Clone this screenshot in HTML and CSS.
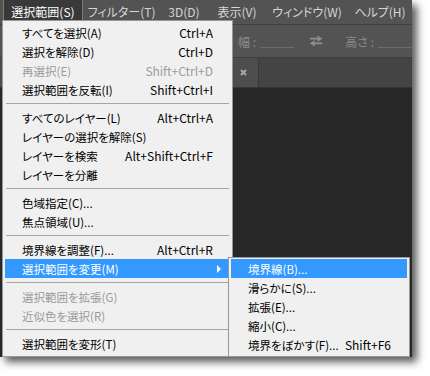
FILE: index.html
```html
<!DOCTYPE html>
<html lang="ja">
<head>
<meta charset="utf-8">
<link rel="stylesheet" href="styles.css">
</head>
<body>
<div class="window">
  <div class="menubar">
    <span class="mb-item active">選択範囲(S)</span>
    <span class="mb-item w-filter">フィルター(T)</span>
    <span class="mb-item w-3d">3D(D)</span>
    <span class="mb-item w-view">表示(V)</span>
    <span class="mb-item w-window">ウィンドウ(W)</span>
    <span class="mb-item w-help">ヘルプ(H)</span>
  </div>
  <div class="options">
    <span class="opt-label">幅 :</span>
    <span class="opt-field"></span>
    <svg class="swap" width="15" height="12" viewBox="0 0 15 12">
      <path d="M1 3.5H11" stroke="#8c8c8c" stroke-width="2" fill="none"/>
      <path d="M9 0L14 3.5L9 7Z" fill="#8c8c8c"/>
      <path d="M4 8.5H14" stroke="#8c8c8c" stroke-width="2" fill="none"/>
      <path d="M6 5L1 8.5L6 12Z" fill="#8c8c8c"/>
    </svg>
    <span class="opt-label">高さ :</span>
    <span class="opt-field"></span>
  </div>
  <div class="tabbar">
    <div class="tab">
      <svg width="7" height="7" viewBox="0 0 7 7"><path d="M1 1L6 6M6 1L1 6" stroke="#a9a9a9" stroke-width="2"/></svg>
    </div>
  </div>
  <div class="canvas"></div>

  <div class="dropdown">
    <div class="item"><span class="lbl">すべてを選択(A)</span><span>Ctrl+A</span></div>
    <div class="item"><span class="lbl">選択を解除(D)</span><span>Ctrl+D</span></div>
    <div class="item disabled"><span class="lbl">再選択(E)</span><span>Shift+Ctrl+D</span></div>
    <div class="item"><span class="lbl">選択範囲を反転(I)</span><span>Shift+Ctrl+I</span></div>
    <div class="sep"></div>
    <div class="item"><span class="lbl">すべてのレイヤー(L)</span><span>Alt+Ctrl+A</span></div>
    <div class="item"><span class="lbl">レイヤーの選択を解除(S)</span><span></span></div>
    <div class="item"><span class="lbl">レイヤーを検索</span><span>Alt+Shift+Ctrl+F</span></div>
    <div class="item"><span class="lbl">レイヤーを分離</span><span></span></div>
    <div class="sep"></div>
    <div class="item"><span class="lbl">色域指定(C)...</span><span></span></div>
    <div class="item"><span class="lbl">焦点領域(U)...</span><span></span></div>
    <div class="sep"></div>
    <div class="item"><span class="lbl">境界線を調整(F)...</span><span>Alt+Ctrl+R</span></div>
    <div class="item hl"><span class="lbl">選択範囲を変更(M)</span><span class="arrow"></span></div>
    <div class="sep"></div>
    <div class="item disabled"><span class="lbl">選択範囲を拡張(G)</span><span></span></div>
    <div class="item disabled"><span class="lbl">近似色を選択(R)</span><span></span></div>
    <div class="sep"></div>
    <div class="item"><span class="lbl">選択範囲を変形(T)</span><span></span></div>
  </div>

  <div class="submenu">
    <div class="item hl"><span class="lbl">境界線(B)...</span><span></span></div>
    <div class="item"><span class="lbl">滑らかに(S)...</span><span></span></div>
    <div class="item"><span class="lbl">拡張(E)...</span><span></span></div>
    <div class="item"><span class="lbl">縮小(C)...</span><span></span></div>
    <div class="item"><span class="lbl">境界をぼかす(F)...</span><span>Shift+F6</span></div>
  </div>
</div>
</body>
</html>
```

FILE: styles.css
```css
html, body {
  margin: 0;
  padding: 0;
  background: #ffffff;
}

body {
  font-family: "Noto Sans CJK JP", "Noto Sans", sans-serif;
  font-feature-settings: "palt";
  width: 430px;
  height: 376px;
  overflow: hidden;
}

.window {
  position: relative;
  width: 412px;
  height: 357px;
  background: #282828;
  box-shadow: 5px 5px 8px rgba(0, 0, 0, 0.65);
  display: flex;
  flex-direction: column;
}

.menubar {
  height: 24px;
  background: #535353;
  border-bottom: 1px solid #404040;
  display: flex;
  align-items: flex-start;
  padding-left: 3px;
  overflow: hidden;
}

.mb-item {
  flex-shrink: 0;
  box-sizing: border-box;
  height: 21px;
  padding-top: 1px;
  display: flex;
  align-items: center;
  justify-content: center;
  font-size: 12px;
  color: #d6d6d6;
  white-space: nowrap;
}

.mb-item.active {
  width: 80px;
  background: #393939;
  border-left: 1px solid #7c7c7c;
  border-right: 1px solid #7c7c7c;
  color: #ffffff;
}

.w-filter { width: 77px; }
.w-3d { width: 48px; }
.w-view { width: 58px; }
.w-window { width: 82px; }
.w-help { width: 64px; }

.options {
  height: 32px;
  background: #535353;
  border-bottom: 1px solid #3d3d3d;
  display: flex;
  align-items: center;
  padding-left: 238px;
  font-size: 12px;
  color: #8a8a8a;
}

.opt-label {
  white-space: nowrap;
}

.opt-field {
  width: 36px;
  height: 12px;
  margin-left: 4px;
  border-bottom: 1px solid #6c6c6c;
  align-self: center;
}

.swap {
  margin: 0 22px 0 15px;
}

.tabbar {
  height: 29px;
  background: #444444;
  border-bottom: 1px solid #353535;
  display: flex;
}

.tab {
  width: 259px;
  background: #4d4d4d;
  border-right: 1px solid #383838;
  display: flex;
  align-items: center;
  justify-content: flex-end;
  padding-right: 11px;
  box-sizing: border-box;
}

.canvas {
  flex: 1;
  background: #282828;
}

.dropdown,
.submenu {
  position: absolute;
  box-sizing: border-box;
  background: #f0f0f0;
  border: 1px solid #979797;
  font-size: 12px;
  color: #000000;
}

.dropdown {
  left: 2px;
  top: 20px;
  width: 231px;
  padding: 2px 2px 3px;
}

.submenu {
  left: 228px;
  top: 257px;
  width: 182px;
  padding: 1px 2px 2px;
}

.item {
  height: 19px;
  display: flex;
  align-items: center;
  justify-content: space-between;
  padding: 0 17px;
  white-space: nowrap;
}

.lbl {
  font-size: 11.5px;
}

.submenu .item {
  padding: 0 16px 0 17px;
}

.item.disabled {
  color: #9b9b9b;
}

.item.hl {
  background: #3399ff;
  color: #ffffff;
}

.arrow {
  width: 0;
  height: 0;
  border-top: 4px solid transparent;
  border-bottom: 4px solid transparent;
  border-left: 4px solid #ffffff;
  margin-right: -8px;
}

.sep {
  height: 9px;
  display: flex;
  align-items: center;
  padding: 0 1px;
}

.sep::before {
  content: "";
  flex: 1;
  height: 1px;
  background: #a5a5a5;
}
```
